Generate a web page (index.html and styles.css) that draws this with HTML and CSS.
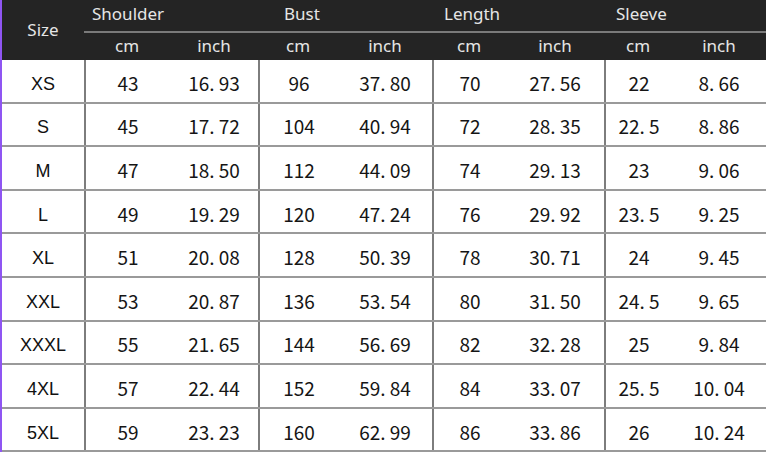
FILE: index.html
```html
<!DOCTYPE html>
<html>
<head>
<meta charset="utf-8">
<link rel="stylesheet" href="styles.css">
</head>
<body>
<div class="chart">
  <div class="head">
    <div class="h-size">Size</div>
    <div class="h-group g1">Shoulder</div>
    <div class="h-group g2">Bust</div>
    <div class="h-group g3">Length</div>
    <div class="h-group g4">Sleeve</div>
    <div class="h-unit">cm</div><div class="h-unit">inch</div>
    <div class="h-unit">cm</div><div class="h-unit">inch</div>
    <div class="h-unit">cm</div><div class="h-unit">inch</div>
    <div class="h-unit">cm</div><div class="h-unit">inch</div>
  </div>
  <div class="row"><div class="c size">XS</div><div class="c grp">43</div><div class="c">16. 93</div><div class="c grp">96</div><div class="c">37. 80</div><div class="c grp">70</div><div class="c">27. 56</div><div class="c grp">22</div><div class="c">8. 66</div></div>
  <div class="row"><div class="c size">S</div><div class="c grp">45</div><div class="c">17. 72</div><div class="c grp">104</div><div class="c">40. 94</div><div class="c grp">72</div><div class="c">28. 35</div><div class="c grp">22. 5</div><div class="c">8. 86</div></div>
  <div class="row"><div class="c size">M</div><div class="c grp">47</div><div class="c">18. 50</div><div class="c grp">112</div><div class="c">44. 09</div><div class="c grp">74</div><div class="c">29. 13</div><div class="c grp">23</div><div class="c">9. 06</div></div>
  <div class="row"><div class="c size">L</div><div class="c grp">49</div><div class="c">19. 29</div><div class="c grp">120</div><div class="c">47. 24</div><div class="c grp">76</div><div class="c">29. 92</div><div class="c grp">23. 5</div><div class="c">9. 25</div></div>
  <div class="row"><div class="c size">XL</div><div class="c grp">51</div><div class="c">20. 08</div><div class="c grp">128</div><div class="c">50. 39</div><div class="c grp">78</div><div class="c">30. 71</div><div class="c grp">24</div><div class="c">9. 45</div></div>
  <div class="row"><div class="c size">XXL</div><div class="c grp">53</div><div class="c">20. 87</div><div class="c grp">136</div><div class="c">53. 54</div><div class="c grp">80</div><div class="c">31. 50</div><div class="c grp">24. 5</div><div class="c">9. 65</div></div>
  <div class="row"><div class="c size">XXXL</div><div class="c grp">55</div><div class="c">21. 65</div><div class="c grp">144</div><div class="c">56. 69</div><div class="c grp">82</div><div class="c">32. 28</div><div class="c grp">25</div><div class="c">9. 84</div></div>
  <div class="row"><div class="c size">4XL</div><div class="c grp">57</div><div class="c">22. 44</div><div class="c grp">152</div><div class="c">59. 84</div><div class="c grp">84</div><div class="c">33. 07</div><div class="c grp">25. 5</div><div class="c">10. 04</div></div>
  <div class="row"><div class="c size">5XL</div><div class="c grp">59</div><div class="c">23. 23</div><div class="c grp">160</div><div class="c">62. 99</div><div class="c grp">86</div><div class="c">33. 86</div><div class="c grp">26</div><div class="c">10. 24</div></div>
</div>
</body>
</html>
```
FILE: styles.css
```css
html, body {
  margin: 0;
  padding: 0;
  background: #ffffff;
}
.chart {
  width: 766px;
  height: 452px;
  overflow: hidden;
  box-sizing: border-box;
  border-left: 2px solid #8f55f2;
}
.head {
  display: grid;
  grid-template-columns: 82px 86px 88px 80px 94px 74px 98px 68px 94px;
  grid-template-rows: 33px 27px;
  background: #242424;
  color: #e6e6e6;
  font-family: "Noto Sans", "DejaVu Sans", sans-serif;
  font-size: 17px;
}
.h-size {
  grid-row: 1 / 3;
  display: flex;
  align-items: center;
  justify-content: center;
  padding-bottom: 2px;
}
.h-group {
  grid-column: span 2;
  border-bottom: 2px solid #7a7a7a;
  display: flex;
  align-items: center;
  justify-content: flex-start;
  padding-bottom: 4px;
}
.g1 { padding-left: 8px; }
.g2 { padding-left: 26px; }
.g3 { padding-left: 12px; }
.g4 { padding-left: 12px; }
.h-unit {
  display: flex;
  align-items: center;
  justify-content: center;
  padding-bottom: 2px;
}
.row {
  display: grid;
  grid-template-columns: 82px 86px 88px 80px 94px 74px 98px 68px 94px;
  height: 43.6px;
  box-sizing: border-box;
  border-bottom: 2px solid #9a9a9a;
  font-family: "Noto Sans CJK SC", "Liberation Sans", sans-serif;
  font-size: 19px;
  color: #151515;
}
.c {
  display: flex;
  align-items: center;
  justify-content: center;
  padding-top: 3px;
}
.size {
  font-family: "Liberation Sans", Arial, sans-serif;
  font-size: 18px;
  padding-top: 7px;
  color: #111;
}
.grp {
  border-left: 2px solid #7d7d7d;
}
```
